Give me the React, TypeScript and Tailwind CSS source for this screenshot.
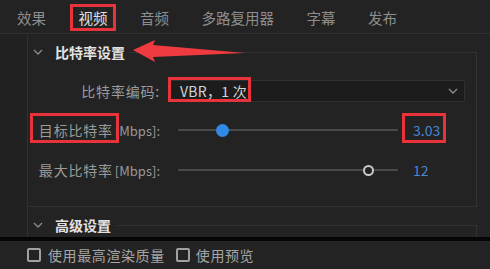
import React from "react";

const tabs = ["效果", "视频", "音频", "多路复用器", "字幕", "发布"];

function Chevron() {
  return (
    <svg width="10" height="6" viewBox="0 0 10 6" className="shrink-0">
      <polyline points="1,1 5,5 9,1" fill="none" stroke="#8c8c8c" strokeWidth="1.3" />
    </svg>
  );
}

function SliderRow({
  label,
  pos,
  value,
  active,
}: {
  label: string;
  pos: number;
  value: string;
  active?: boolean;
}) {
  return (
    <div className="flex items-center h-[22px]">
      <div className="w-[132px] text-right text-[#9a9a9a] whitespace-nowrap">
        <span className="tracking-[0.8px]">{label}</span>
        <span className="ml-[2px] text-[13px]">[Mbps]:</span>
      </div>
      <div className="ml-[18px] w-[220px] h-[14px] relative flex items-center">
        <div className="w-full h-[2px] bg-[#4a4a4a]" />
        {active ? (
          <div
            className="absolute top-[1px] w-[13px] h-[13px] rounded-full bg-[#2f8ae8]"
            style={{ left: pos - 6 }}
          />
        ) : (
          <div
            className="absolute top-[2px] w-[11px] h-[11px] rounded-full border-2 border-[#c9c9c9] bg-[#232323]"
            style={{ left: pos - 5 }}
          />
        )}
      </div>
      <div className="ml-[15px] text-[#4686d2]">{value}</div>
    </div>
  );
}

export default function App() {
  return (
    <div className="relative w-[490px] h-[269px] overflow-hidden bg-[#232323] flex flex-col text-[14px] font-['Noto_Sans_CJK_SC',sans-serif] select-none">
      {/* Tabs */}
      <div className="h-[34px] shrink-0 border-b border-[#2f2f2f] flex items-start pt-[8px] pl-[17px] gap-[32.5px] text-[14.5px]">
        {tabs.map((t) => (
          <div key={t} className="flex flex-col items-stretch">
            <span className={`leading-[20px] ${t === "视频" ? "text-[#e0e0e0]" : "text-[#8e8e8e]"}`}>{t}</span>
            {t === "视频" && <div className="h-[1px] mt-[1px] bg-[#e6e6e6]" />}
          </div>
        ))}
      </div>

      {/* Panel */}
      <div className="flex-1 flex min-h-0">
        <div className="w-[28px] shrink-0 border-r border-[#303030] bg-[#212121]" />
        <div className="flex-1 flex flex-col pr-[13px]">
          {/* 比特率设置 */}
          <div className="h-[28px] mt-[4px] flex items-stretch">
            <div className="flex items-center pl-[5px]">
              <Chevron />
              <span className="ml-[12px] font-bold text-[#e2e2e2] leading-[20px]">比特率设置</span>
            </div>
            <div className="flex-1 ml-[4px] mt-[14px] border-t border-r border-[#333333]" />
          </div>
          <div className="h-[141px] border-r border-b border-[#333333] flex flex-col pt-[14px]">
            <div className="flex items-center h-[22px]">
              <div className="w-[132px] text-right text-[#9a9a9a] tracking-[0.8px]">比特率编码:</div>
              <div className="ml-[8px] w-[297px] h-[22px] bg-[#1c1c1c] border border-[#303030] rounded-[2px] flex items-center pl-[11px] pr-[6px]">
                <span className="flex-1 text-[#d4d4d4] text-[14px] tracking-[0.3px]">VBR，1 次</span>
                <Chevron />
              </div>
            </div>
            <div className="mt-[17px]">
              <SliderRow label="目标比特率" pos={44} value="3.03" active />
            </div>
            <div className="mt-[18px]">
              <SliderRow label="最大比特率" pos={190} value="12" />
            </div>
          </div>

          {/* 高级设置 */}
          <div className="flex-1 mt-[6px] flex items-stretch">
            <div className="flex items-center pl-[5px]">
              <Chevron />
              <span className="ml-[12px] font-bold text-[#e2e2e2] leading-[20px]">高级设置</span>
            </div>
            <div className="flex-1 ml-[6px] mt-[12px] border-t border-r border-[#333333]" />
          </div>
        </div>
      </div>

      <div className="h-[4px] shrink-0 bg-[#050505]" />

      {/* Footer */}
      <div className="h-[28px] shrink-0 flex items-center pl-[27px] text-[#a6a6a6] tracking-[0.6px]">
        <div className="w-[14px] h-[14px] border-2 border-[#a0a0a0] rounded-[2px]" />
        <span className="ml-[7px]">使用最高渲染质量</span>
        <div className="ml-[11px] w-[14px] h-[14px] border-2 border-[#a0a0a0] rounded-[2px]" />
        <span className="ml-[6px]">使用预览</span>
      </div>

      {/* Annotations */}
      <div className="absolute left-[70px] top-[4px] w-[46px] h-[27px] border-[3px] border-[#e8333b]" />
      <div className="absolute left-[168px] top-[77px] w-[83px] h-[25px] border-[3px] border-[#e8333b]" />
      <div className="absolute left-[30px] top-[113px] w-[89px] h-[30px] border-[3px] border-[#e8333b]" />
      <div className="absolute left-[402px] top-[113px] w-[44px] h-[30px] border-[3px] border-[#e8333b]" />
      <svg className="absolute left-[130px] top-[38px]" width="120" height="26" viewBox="0 0 120 26">
        <polygon points="3,12 25,2 23,7 115,15 23,19 25,24" fill="#ef3a3f" />
      </svg>
    </div>
  );
}
